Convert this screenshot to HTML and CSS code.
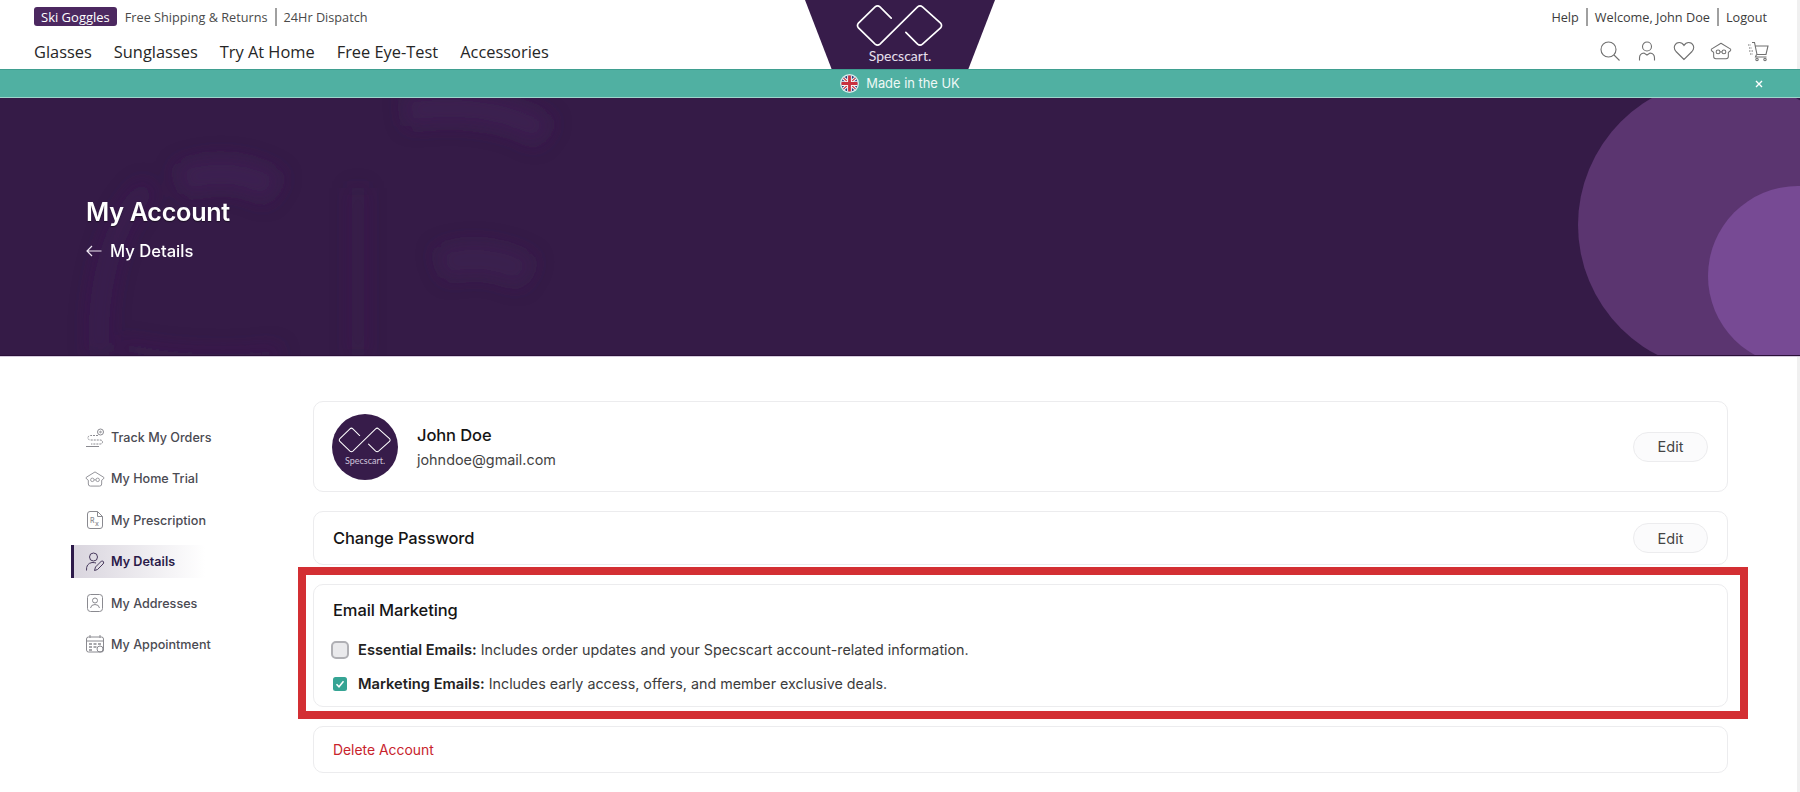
FILE: index.html
```html
<!DOCTYPE html>
<html lang="en">
<head>
<meta charset="utf-8">
<title>My Details - Specscart</title>
<link rel="stylesheet" href="styles.css">
</head>
<body>
<svg class="defs" width="0" height="0" aria-hidden="true">
  <symbol id="mark" viewBox="0 0 90 44">
    <path d="M36 14.5 L24.5 3 Q22 .8 19.5 3 L2.5 19.5 Q.5 22 2.5 24.5 L19.5 41 Q22 43 24.5 41 L63 3 Q65.5 .8 68 3 L86.5 19.5 Q88.5 22 86.5 24.5 L68 41 Q65.5 43 63 41 L51 29" fill="none" stroke="currentColor" stroke-width="1.7" stroke-linecap="round"/>
  </symbol>
  <symbol id="trial" viewBox="0 0 24 20">
    <path d="M12 1.5 L22.5 8 Q23 9 22 10 L20 11.5 L20 16 Q20 18.5 17.5 18.5 L6.5 18.5 Q4 18.5 4 16 L4 11.5 L2 10 Q1 9 1.500 8 Z" fill="none" stroke="currentColor" stroke-width="1.100" stroke-linejoin="round"/>
    <circle cx="8.800" cy="11" r="2.100" fill="none" stroke="currentColor"/>
    <circle cx="15.200" cy="11" r="2.100" fill="none" stroke="currentColor"/>
    <path d="M10.900 11 h2.200" stroke="currentColor"/>
  </symbol>
</svg>

<header class="site-header">
  <div class="header-left">
    <div class="top-row">
      <span class="badge">Ski Goggles</span>
      <span class="top-link">Free Shipping &amp; Returns</span>
      <span class="sep"></span>
      <span class="top-link">24Hr Dispatch</span>
    </div>
    <nav class="main-nav">
      <a>Glasses</a><a>Sunglasses</a><a>Try At Home</a><a>Free Eye-Test</a><a>Accessories</a>
    </nav>
  </div>
  <div class="logo">
    <svg class="logo-mark"><use href="#mark"/></svg>
    <span class="logo-text">Specscart.</span>
  </div>
  <div class="header-right">
    <div class="top-row">
      <span class="top-link dark">Help</span>
      <span class="sep"></span>
      <span class="top-link dark">Welcome, John Doe</span>
      <span class="sep"></span>
      <span class="top-link dark">Logout</span>
    </div>
    <div class="icon-row">
      <svg class="hicon" viewBox="0 0 22 22"><circle cx="9.500" cy="9.500" r="7.500"/><path d="M15 15 L20.500 20.500"/></svg>
      <svg class="hicon" viewBox="0 0 22 22"><circle cx="11" cy="6.500" r="4.500"/><path d="M3.500 20.500 V18 Q3.500 13.500 8 13 L11 15 L14 13 Q18.500 13.500 18.500 18 V20.500"/></svg>
      <svg class="hicon" viewBox="0 0 22 22"><path d="M11 19.500 L3 11.500 C-.5 7.500 2 2.500 6.300 2.500 C8.500 2.500 10 3.800 11 5.500 C12 3.800 13.500 2.500 15.700 2.500 C20 2.500 22.500 7.500 19 11.500 Z"/></svg>
      <svg class="hicon trial-h"><use href="#trial"/></svg>
      <svg class="hicon" viewBox="0 0 22 22"><path d="M5 2.500 H7.500 L10 14.500 H19 L21 6 H8.500"/><path d="M9.500 14.500 L8.500 17 H19.500"/><circle cx="10" cy="19.500" r="1.200"/><circle cx="18" cy="19.500" r="1.200"/><path d="M1 5 H4 M2 8 H5 M2 11 H6 M3 14 H6" stroke-dasharray="1.500 1"/></svg>
    </div>
  </div>
</header>

<div class="promo">
  <span></span>
  <div class="promo-center">
    <svg class="flag" viewBox="0 0 20 20">
      <defs><clipPath id="fc"><circle cx="10" cy="10" r="8.500"/></clipPath></defs>
      <circle cx="10" cy="10" r="10" fill="#d8ecea"/>
      <g clip-path="url(#fc)">
        <rect width="20" height="20" fill="#2b3f7e"/>
        <path d="M0 1 L20 19 M20 1 L0 19" stroke="#f4f4f4" stroke-width="3.500"/>
        <path d="M0 1 L20 19 M20 1 L0 19" stroke="#c9323f" stroke-width="1.200"/>
        <path d="M10 0 V20 M0 10 H20" stroke="#f4f4f4" stroke-width="5"/>
        <path d="M10 0 V20 M0 10 H20" stroke="#c9323f" stroke-width="3"/>
      </g>
    </svg>
    <span class="promo-text">Made in the UK</span>
  </div>
  <svg class="promo-close" viewBox="0 0 8 8"><path d="M1 1 L7 7 M7 1 L1 7"/></svg>
</div>

<section class="hero">
  <svg class="hero-ghost" viewBox="0 0 700 258" preserveAspectRatio="xMinYMin slice" aria-hidden="true">
    <defs><filter id="blur" x="-20%" y="-20%" width="140%" height="140%"><feGaussianBlur stdDeviation="10"/></filter></defs>
    <g fill="none" stroke="#47265f" filter="url(#blur)">
      <path d="M100 258 C95 200 110 120 150 90" stroke-width="20" opacity=".3"/>
      <path d="M358 258 V90" stroke-width="16" opacity=".22"/>
      <path d="M405 14 C450 6 510 10 545 36" stroke-width="30" opacity=".42"/>
      <path d="M440 168 C470 155 505 162 528 176" stroke-width="32" opacity=".36"/>
      <path d="M180 84 C210 72 245 72 275 92" stroke-width="32" opacity=".42"/>
      <path d="M120 248 C170 262 250 262 280 254" stroke-width="14" opacity=".28"/>
    </g>
  </svg>
  <div class="circle circle-big"></div>
  <div class="circle circle-small"></div>
  <div class="hero-copy">
    <h1 class="hero-title">My Account</h1>
    <div class="hero-sub">
      <svg class="back-arrow" viewBox="0 0 16 12"><path d="M15.500 6 H1 M6 1 L1 6 L6 11"/></svg>
      <span>My Details</span>
    </div>
  </div>
</section>

<main class="content">
  <aside class="side">
    <a class="side-item">
      <svg class="sicon" viewBox="0 0 20 20"><circle cx="15.500" cy="4" r="3"/><circle cx="15.500" cy="4" r=".8"/><path d="M13 7.500 H5.500 Q2.500 8 3 10.500 Q3.500 12 6 12 H15 Q17.500 12 17.500 14 Q17.500 16 15 16 H6" stroke-dasharray="2 1"/><path d="M1 18.500 H14"/></svg>
      <span>Track My Orders</span>
    </a>
    <a class="side-item">
      <svg class="sicon"><use href="#trial"/></svg>
      <span>My Home Trial</span>
    </a>
    <a class="side-item">
      <svg class="sicon" viewBox="0 0 20 20"><path d="M5 1.500 H12.500 L17.500 6.500 V16 Q17.500 18.500 15 18.500 H5 Q2.500 18.500 2.500 16 V4 Q2.500 1.500 5 1.500 Z"/><path d="M12.500 1.500 V6.500 H17.500"/><text class="rx" x="5" y="13">R</text><text class="rx" x="10" y="16">x</text></svg>
      <span>My Prescription</span>
    </a>
    <a class="side-item active">
      <svg class="sicon" viewBox="0 0 20 20"><circle cx="8.500" cy="5" r="4"/><path d="M1.500 18.500 Q1 11.500 7 10.500 Q9.500 10.500 11 11"/><path d="M9.500 18.500 L10.500 15 L16.500 9 Q18 8.500 18.500 10 Q19 11 18 12 L12.500 17.500 Z"/></svg>
      <span>My Details</span>
    </a>
    <a class="side-item">
      <svg class="sicon" viewBox="0 0 20 20"><rect x="2.500" y="1.500" width="15" height="17" rx="3"/><circle cx="10" cy="7.500" r="2.500"/><path d="M5.500 15 Q6 11.500 10 11.500 Q14 11.500 14.500 15"/></svg>
      <span>My Addresses</span>
    </a>
    <a class="side-item">
      <svg class="sicon" viewBox="0 0 20 20"><rect x="1.500" y="3" width="17" height="15" rx="2"/><path d="M1.500 7 H18.500 M5 1 V4 M15 1 V4"/><path d="M4 10 H7 M8.500 10 H11.500 M13 10 H16 M4 13 H7 M8.500 13 H11.500 M4 16 H7" stroke-width="1.600"/><circle cx="15" cy="15" r="3"/></svg>
      <span>My Appointment</span>
    </a>
  </aside>

  <div class="cards">
    <div class="card card-profile">
      <div class="avatar">
        <svg class="avatar-mark"><use href="#mark"/></svg>
        <span class="avatar-text">Specscart.</span>
      </div>
      <div class="profile-info">
        <div class="card-title">John Doe</div>
        <div class="profile-email">johndoe@gmail.com</div>
      </div>
      <button class="edit-btn">Edit</button>
    </div>

    <div class="card card-password">
      <div class="card-title">Change Password</div>
      <button class="edit-btn">Edit</button>
    </div>

    <div class="card card-email">
      <div class="card-title">Email Marketing</div>
      <div class="pref-row first">
        <span class="check-slot"><span class="box-off"></span></span>
        <p class="pref-text"><b>Essential Emails:</b> Includes order updates and your Specscart account-related information.</p>
      </div>
      <div class="pref-row">
        <span class="check-slot">
          <svg class="box-on" viewBox="0 0 14 14"><rect width="14" height="14" rx="2.500" fill="#36a494"/><path d="M3.500 7.200 L6 9.800 L10.500 4.300" fill="none" stroke="#fff" stroke-width="1.500"/></svg>
        </span>
        <p class="pref-text"><b>Marketing Emails:</b> Includes early access, offers, and member exclusive deals.</p>
      </div>
    </div>

    <div class="card card-delete">
      <a class="delete-link">Delete Account</a>
    </div>
  </div>
</main>
</body>
</html>
```

FILE: styles.css
```css
* { box-sizing: border-box; }
html, body { margin: 0; padding: 0; height: 792px; overflow: hidden; background: #fff; }
body { font-family: Inter, "Liberation Sans", sans-serif; color: #222; }
.defs { position: absolute; }
a { color: inherit; text-decoration: none; }

.site-header {
  display: grid;
  grid-template-columns: 1fr 190px 1fr;
  height: 69px;
  background: linear-gradient(to left, #f0f0f0 3px, #fff 3px);
  font-family: "Open Sans", "Liberation Sans", sans-serif;
}
.header-left { padding: 7px 0 0 34px; }
.header-right { padding: 7px 33px 0 0; display: flex; flex-direction: column; align-items: flex-end; }
.top-row { display: flex; align-items: center; height: 19px; font-size: 12.700px; }
.badge {
  display: flex; align-items: center; height: 19px; padding: 0 7px; margin-right: 8px;
  background: #4c2860; border-radius: 3px; color: #fff; font-size: 13px;
}
.top-link { color: #4a4a4a; white-space: nowrap; }
.top-link.dark { color: #3c3c3c; }
.sep { width: 2px; height: 18px; margin: 0 7px; background: #a0a0a0; }
.main-nav { display: flex; gap: 22px; margin-top: 14px; font-size: 16.400px; line-height: 24px; color: #262626; }

.logo {
  display: flex; flex-direction: column; align-items: center;
  height: 69px; padding-top: 4px;
  background: #371c4a;
  clip-path: polygon(0 0, 100% 0, 86% 100%, 14% 100%);
  color: #fff;
}
.logo-mark { width: 88px; height: 43px; }
.logo-text { font-family: Lato, "Open Sans", sans-serif; font-size: 14px; line-height: 17px; color: #e8e0ee; }

.icon-row { display: flex; gap: 15px; margin: 14px -2px 0 0; }
.hicon { width: 22px; height: 22px; fill: none; stroke: #707070; stroke-width: 1.100; color: #707070; }
.trial-h { stroke: none; }

.promo {
  display: grid; grid-template-columns: 1fr auto 1fr; align-items: center;
  height: 29px;
  background: #50b0a2;
  border-top: 1px solid #3f9f90;
  border-bottom: 1px solid #9dd6cc;
}
.promo-center { display: flex; align-items: center; gap: 7px; }
.flag { width: 19px; height: 19px; }
.promo-text { font-size: 12.900px; color: #eef8f6; line-height: 19px; white-space: nowrap; }
.promo-close {
  justify-self: end; width: 8px; height: 8px; margin-right: 37px;
  fill: none; stroke: #fff; stroke-width: 1.400;
}

.hero {
  position: relative; overflow: hidden;
  height: 258px; padding: 98px 0 0 86px;
  background: #351b47;
  border-bottom: 1px solid #2a1038;
  box-shadow: 0 1px 0 #d5cadd;
}
.hero-ghost { position: absolute; left: 0; top: 0; width: 700px; height: 258px; }
.circle { position: absolute; border-radius: 50%; }
.circle-big { width: 292px; height: 292px; right: -70px; top: -19px; background: #5b3570; }
.circle-small { width: 180px; height: 180px; right: -88px; top: 88px; background: #774a94; }
.hero-copy { position: relative; color: #fff; }
.hero-title { margin: 0; font-size: 25.200px; line-height: 32px; font-weight: 600; letter-spacing: -.3px; text-shadow: 0 1px 1px rgba(0,0,0,.5); }
.hero-sub { display: flex; align-items: center; gap: 8px; margin-top: 12px; font-size: 16.600px; line-height: 22px; font-weight: 500; }
.back-arrow { width: 16px; height: 12px; fill: none; stroke: #f0e8f4; stroke-width: 1.200; }

.content {
  display: flex; height: 436px; padding: 45px 0 0 71px;
  background: linear-gradient(to left, #f0f0f0 3px, #fff 3px);
}
.side { width: 242px; flex: none; margin-top: 20px; display: flex; flex-direction: column; gap: 8.400px; align-items: flex-start; }
.side-item {
  display: flex; align-items: center; gap: 6px;
  width: 134px; height: 33px; padding-left: 14px;
  font-size: 12.600px; font-weight: 500; color: #4a4a52; white-space: nowrap;
}
.side-item.active {
  padding-left: 11px; border-left: 3px solid #2d1a4a;
  background: linear-gradient(to right, #d9d5de, rgba(217,213,222,0));
  color: #2a1a48; font-weight: 600;
}
.sicon { width: 20px; height: 20px; fill: none; stroke: #8a8a90; stroke-width: 1; color: #8a8a90; flex: none; }
.active .sicon { stroke: #47395c; }
.rx { font-family: Inter, sans-serif; font-size: 7px; fill: #8a8a90; stroke: none; }

.cards { width: 1415px; display: flex; flex-direction: column; gap: 19px; }
.card { background: #fff; border: 1px solid #ececee; border-radius: 10px; padding: 0 19px; }
.card-title { font-size: 16.500px; line-height: 24px; font-weight: 500; color: #151515; letter-spacing: -.1px; }
.card-profile { display: flex; align-items: center; height: 91px; }
.avatar {
  display: flex; flex-direction: column; align-items: center; flex: none;
  width: 66px; height: 66px; margin-left: -1px; padding-top: 13px;
  background: #371c4a; border-radius: 50%; color: #fff;
}
.avatar-mark { width: 54px; height: 26px; }
.avatar-text { font-family: Lato, sans-serif; font-size: 9px; line-height: 12px; margin-top: 2px; color: #cfc3da; }
.profile-info { flex: 1; margin-left: 19px; padding-top: 2px; }
.profile-email { margin-top: 1px; font-size: 14.400px; line-height: 24px; color: #444; }
.edit-btn {
  width: 75px; height: 30px; padding: 0;
  background: #fbfbfc; border: 1px solid #ececee; border-radius: 15px;
  font-family: Inter, sans-serif; font-size: 14.500px; color: #444;
}
.card-password { display: flex; align-items: center; justify-content: space-between; height: 54px; }

.card-email { position: relative; height: 123px; padding-top: 13px; }
.card-email::after {
  content: ""; position: absolute; pointer-events: none;
  left: -16px; right: -21px; top: -18px; bottom: -13px;
  border: 8px solid #d32f33;
}
.pref-row { display: flex; align-items: center; gap: 9px; height: 20px; margin-top: 14px; margin-left: -2px; }
.pref-row.first { margin-top: 18px; }
.check-slot { display: flex; justify-content: center; width: 18px; flex: none; }
.box-off { width: 18px; height: 18px; background: #eaeaec; border: 2px solid #b0b0b4; border-radius: 5px; }
.box-on { width: 14px; height: 14px; }
.pref-text { margin: 0; font-size: 14.300px; line-height: 20px; color: #3c3c3c; white-space: nowrap; }
.pref-text b { font-size: 14.700px; font-weight: 600; color: #222; }

.card-delete { display: flex; align-items: center; height: 47px; }
.delete-link { font-size: 13.900px; color: #c8232c; }
```
